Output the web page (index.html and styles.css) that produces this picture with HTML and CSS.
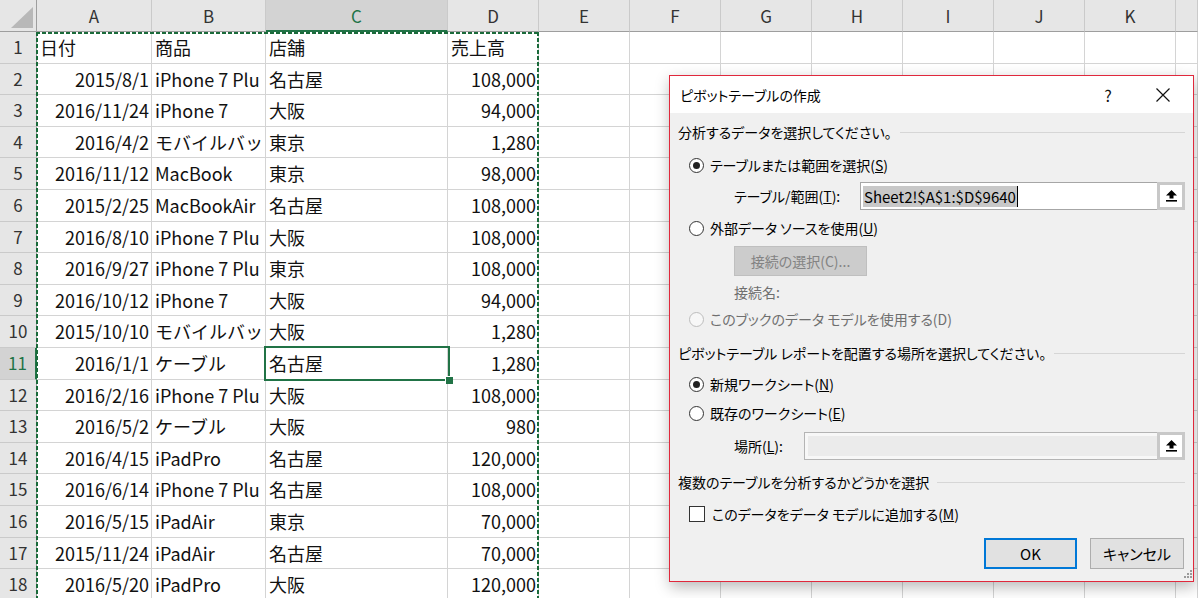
FILE: index.html
```html
<!DOCTYPE html>
<html lang="ja">
<head>
<meta charset="utf-8">
<title>ピボットテーブルの作成</title>
<link rel="stylesheet" href="styles.css">
</head>
<body>
<div class="sheet">
  <div class="grid">
    <div class="corner"><span class="tri"></span></div>
    <div class="ch">A</div><div class="ch">B</div><div class="ch sel">C</div><div class="ch">D</div><div class="ch">E</div><div class="ch">F</div><div class="ch">G</div><div class="ch">H</div><div class="ch">I</div><div class="ch">J</div><div class="ch">K</div><div class="ch"></div>

    <div class="rh">1</div><div class="c">日付</div><div class="c">商品</div><div class="c">店舗</div><div class="c">売上高</div><div class="c"></div><div class="c"></div><div class="c"></div><div class="c"></div><div class="c"></div><div class="c"></div><div class="c"></div><div class="c"></div>
    <div class="rh">2</div><div class="c r">2015/8/1</div><div class="c">iPhone 7 Plu</div><div class="c">名古屋</div><div class="c r">108,000</div><div class="c"></div><div class="c"></div><div class="c"></div><div class="c"></div><div class="c"></div><div class="c"></div><div class="c"></div><div class="c"></div>
    <div class="rh">3</div><div class="c r">2016/11/24</div><div class="c">iPhone 7</div><div class="c">大阪</div><div class="c r">94,000</div><div class="c"></div><div class="c"></div><div class="c"></div><div class="c"></div><div class="c"></div><div class="c"></div><div class="c"></div><div class="c"></div>
    <div class="rh">4</div><div class="c r">2016/4/2</div><div class="c">モバイルバッ</div><div class="c">東京</div><div class="c r">1,280</div><div class="c"></div><div class="c"></div><div class="c"></div><div class="c"></div><div class="c"></div><div class="c"></div><div class="c"></div><div class="c"></div>
    <div class="rh">5</div><div class="c r">2016/11/12</div><div class="c">MacBook</div><div class="c">東京</div><div class="c r">98,000</div><div class="c"></div><div class="c"></div><div class="c"></div><div class="c"></div><div class="c"></div><div class="c"></div><div class="c"></div><div class="c"></div>
    <div class="rh">6</div><div class="c r">2015/2/25</div><div class="c">MacBookAir</div><div class="c">名古屋</div><div class="c r">108,000</div><div class="c"></div><div class="c"></div><div class="c"></div><div class="c"></div><div class="c"></div><div class="c"></div><div class="c"></div><div class="c"></div>
    <div class="rh">7</div><div class="c r">2016/8/10</div><div class="c">iPhone 7 Plu</div><div class="c">大阪</div><div class="c r">108,000</div><div class="c"></div><div class="c"></div><div class="c"></div><div class="c"></div><div class="c"></div><div class="c"></div><div class="c"></div><div class="c"></div>
    <div class="rh">8</div><div class="c r">2016/9/27</div><div class="c">iPhone 7 Plu</div><div class="c">東京</div><div class="c r">108,000</div><div class="c"></div><div class="c"></div><div class="c"></div><div class="c"></div><div class="c"></div><div class="c"></div><div class="c"></div><div class="c"></div>
    <div class="rh">9</div><div class="c r">2016/10/12</div><div class="c">iPhone 7</div><div class="c">大阪</div><div class="c r">94,000</div><div class="c"></div><div class="c"></div><div class="c"></div><div class="c"></div><div class="c"></div><div class="c"></div><div class="c"></div><div class="c"></div>
    <div class="rh">10</div><div class="c r">2015/10/10</div><div class="c">モバイルバッ</div><div class="c">大阪</div><div class="c r">1,280</div><div class="c"></div><div class="c"></div><div class="c"></div><div class="c"></div><div class="c"></div><div class="c"></div><div class="c"></div><div class="c"></div>
    <div class="rh sel">11</div><div class="c r">2016/1/1</div><div class="c">ケーブル</div><div class="c">名古屋</div><div class="c r">1,280</div><div class="c"></div><div class="c"></div><div class="c"></div><div class="c"></div><div class="c"></div><div class="c"></div><div class="c"></div><div class="c"></div>
    <div class="rh">12</div><div class="c r">2016/2/16</div><div class="c">iPhone 7 Plu</div><div class="c">大阪</div><div class="c r">108,000</div><div class="c"></div><div class="c"></div><div class="c"></div><div class="c"></div><div class="c"></div><div class="c"></div><div class="c"></div><div class="c"></div>
    <div class="rh">13</div><div class="c r">2016/5/2</div><div class="c">ケーブル</div><div class="c">大阪</div><div class="c r">980</div><div class="c"></div><div class="c"></div><div class="c"></div><div class="c"></div><div class="c"></div><div class="c"></div><div class="c"></div><div class="c"></div>
    <div class="rh">14</div><div class="c r">2016/4/15</div><div class="c">iPadPro</div><div class="c">名古屋</div><div class="c r">120,000</div><div class="c"></div><div class="c"></div><div class="c"></div><div class="c"></div><div class="c"></div><div class="c"></div><div class="c"></div><div class="c"></div>
    <div class="rh">15</div><div class="c r">2016/6/14</div><div class="c">iPhone 7 Plu</div><div class="c">名古屋</div><div class="c r">108,000</div><div class="c"></div><div class="c"></div><div class="c"></div><div class="c"></div><div class="c"></div><div class="c"></div><div class="c"></div><div class="c"></div>
    <div class="rh">16</div><div class="c r">2016/5/15</div><div class="c">iPadAir</div><div class="c">東京</div><div class="c r">70,000</div><div class="c"></div><div class="c"></div><div class="c"></div><div class="c"></div><div class="c"></div><div class="c"></div><div class="c"></div><div class="c"></div>
    <div class="rh">17</div><div class="c r">2015/11/24</div><div class="c">iPadAir</div><div class="c">名古屋</div><div class="c r">70,000</div><div class="c"></div><div class="c"></div><div class="c"></div><div class="c"></div><div class="c"></div><div class="c"></div><div class="c"></div><div class="c"></div>
    <div class="rh">18</div><div class="c r">2016/5/20</div><div class="c">iPadPro</div><div class="c">大阪</div><div class="c r">120,000</div><div class="c"></div><div class="c"></div><div class="c"></div><div class="c"></div><div class="c"></div><div class="c"></div><div class="c"></div><div class="c"></div>
  </div>

  <div class="ants"></div>
  <div class="cursor"><span class="handle"></span></div>

  <div class="dialog">
    <div class="titlebar">
      <span class="title">ピボットテーブルの作成</span>
      <span class="help">?</span>
      <span class="close"><svg width="14" height="14" viewBox="0 0 14 14"><path d="M0.5 0.5 L13.5 13.5 M13.5 0.5 L0.5 13.5" stroke="#111" stroke-width="1.2" fill="none"/></svg></span>
    </div>
    <div class="dbody">
      <div class="group g1"><span>分析するデータを選択してください。</span><i class="rule"></i></div>
      <div class="opt o1"><span class="radio on"></span><span>テーブルまたは範囲を選択(<u>S</u>)</span></div>
      <div class="field f1">
        <span class="flabel w1">テーブル/範囲(<u>T</u>):</span>
        <div class="input">
          <span class="seltext">Sheet2!$A$1:$D$9640</span><span class="caret"></span>
          <span class="pick"><svg width="11" height="12" viewBox="0 0 11 12"><path d="M5.5 0 L11 5.5 L7.5 5.5 L7.5 8.5 L3.5 8.5 L3.5 5.5 L0 5.5 Z" fill="#000"/><rect x="0" y="10" width="11" height="1.6" fill="#000"/></svg></span>
        </div>
      </div>
      <div class="opt o2"><span class="radio"></span><span>外部データ ソースを使用(<u>U</u>)</span></div>
      <div class="brow"><span class="dbtn">接続の選択(C)...</span></div>
      <div class="dim conn">接続名:</div>
      <div class="opt o3 dim"><span class="radio off"></span><span>このブックのデータ モデルを使用する(D)</span></div>
      <div class="group g2"><span>ピボットテーブル レポートを配置する場所を選択してください。</span><i class="rule"></i></div>
      <div class="opt o4"><span class="radio on"></span><span>新規ワークシート(<u>N</u>)</span></div>
      <div class="opt o5"><span class="radio"></span><span>既存のワークシート(<u>E</u>)</span></div>
      <div class="field f2">
        <span class="flabel w2">場所(<u>L</u>):</span>
        <div class="input disabled">
          <span class="pick"><svg width="11" height="12" viewBox="0 0 11 12"><path d="M5.5 0 L11 5.5 L7.5 5.5 L7.5 8.5 L3.5 8.5 L3.5 5.5 L0 5.5 Z" fill="#000"/><rect x="0" y="10" width="11" height="1.6" fill="#000"/></svg></span>
        </div>
      </div>
      <div class="group g3"><span>複数のテーブルを分析するかどうかを選択</span><i class="rule"></i></div>
      <div class="opt o6"><span class="check"></span><span>このデータをデータ モデルに追加する(<u>M</u>)</span></div>
      <div class="footer">
        <span class="btn ok">OK</span>
        <span class="btn">キャンセル</span>
      </div>
    </div>
    <span class="grip"><svg width="10" height="10" viewBox="0 0 10 10" fill="#9a9a9a"><rect x="8" y="0" width="2" height="2"/><rect x="5" y="3" width="2" height="2"/><rect x="8" y="3" width="2" height="2"/><rect x="2" y="6" width="2" height="2"/><rect x="5" y="6" width="2" height="2"/><rect x="8" y="6" width="2" height="2"/></svg></span>
  </div>
</div>
</body>
</html>
```

FILE: styles.css
```css
* { box-sizing: border-box; }
html, body {
  margin: 0;
  padding: 0;
  width: 1198px;
  height: 598px;
  overflow: hidden;
  background: #fff;
}
body {
  font-family: "Noto Sans CJK JP", "Noto Sans", sans-serif;
  color: #000;
}
.sheet {
  position: relative;
  width: 1198px;
  height: 598px;
  overflow: hidden;
}
.grid {
  display: grid;
  grid-template-columns: 37px 115px 114px 182px 91px 91px 91px 91px 91px 91px 91px 91px 1fr;
  grid-template-rows: 32px repeat(18, 31.6px);
}
.corner {
  position: relative;
  background: #e6e6e6;
  border-right: 1px solid #9e9e9e;
  border-bottom: 1px solid #9e9e9e;
}
.tri {
  position: absolute;
  right: 3px;
  bottom: 3px;
  width: 0;
  height: 0;
  border-left: 22px solid transparent;
  border-bottom: 21px solid #b8b8b8;
}
.ch {
  background: #e6e6e6;
  border-right: 1px solid #cacaca;
  border-bottom: 1px solid #9e9e9e;
  font-size: 17px;
  color: #333;
  text-align: center;
  line-height: 31px;
}
.ch.sel {
  background: #d3d3d3;
  color: #217346;
  border-bottom: 2px solid #217346;
}
.rh {
  background: #e6e6e6;
  border-right: 1px solid #9e9e9e;
  border-bottom: 1px solid #cacaca;
  font-size: 17px;
  color: #333;
  text-align: center;
  line-height: 30px;
}
.rh.sel {
  background: #d3d3d3;
  color: #217346;
  border-right: 2px solid #217346;
}
.c {
  border-right: 1px solid #d4d4d4;
  border-bottom: 1px solid #d4d4d4;
  font-size: 18px;
  line-height: 30px;
  padding: 0 3px;
  white-space: nowrap;
  overflow: hidden;
  color: #111;
}
.c.r {
  text-align: right;
  padding-right: 2px;
}
.ants {
  position: absolute;
  left: 36px;
  top: 32px;
  width: 503px;
  height: 620px;
  pointer-events: none;
  background:
    repeating-linear-gradient(to right, #1a6a3a 0 4px, transparent 4px 6px) 0 0 / 100% 2px no-repeat,
    repeating-linear-gradient(to bottom, #1a6a3a 0 4px, transparent 4px 6px) 0 0 / 2px 100% no-repeat,
    repeating-linear-gradient(to bottom, #1a6a3a 0 4px, transparent 4px 6px) 100% 0 / 2px 100% no-repeat;
}
.cursor {
  position: absolute;
  left: 264px;
  top: 346px;
  width: 186px;
  height: 35px;
  border: 2px solid #217346;
}
.handle {
  position: absolute;
  right: -5px;
  bottom: -5px;
  width: 8px;
  height: 8px;
  background: #217346;
  border-left: 1px solid #fff;
  border-top: 1px solid #fff;
}

/* dialog */
.dialog {
  position: absolute;
  left: 669px;
  top: 75px;
  width: 525px;
  height: 507px;
  border: 1px solid #e0283c;
  background: #f0f0f0;
  box-shadow: 1px 5px 14px rgba(0, 0, 0, 0.28);
  font-size: 14px;
  font-feature-settings: "palt";
  color: #000;
}
.titlebar {
  height: 37px;
  background: #fff;
  display: flex;
  align-items: center;
  padding: 0 7px 0 10px;
}
.title {
  flex: 1;
  font-size: 14px;
  padding-top: 1px;
}
.help {
  width: 40px;
  text-align: center;
  font-size: 16px;
  color: #111;
}
.close {
  width: 46px;
  margin-left: 12px;
  display: flex;
  justify-content: center;
  align-items: center;
}
.dbody {
  padding: 6px 8px 0 8px;
}
.group {
  display: flex;
  align-items: center;
  height: 26px;
  gap: 8px;
}
.rule {
  flex: 1;
  height: 1px;
  background: #d6d6d6;
}
.opt {
  display: flex;
  align-items: center;
  height: 26px;
  padding-left: 11px;
  gap: 6px;
}
.radio {
  width: 15px;
  height: 15px;
  border: 1px solid #333;
  border-radius: 50%;
  background: #fff;
  position: relative;
  flex: none;
}
.radio.on::after {
  content: "";
  position: absolute;
  left: 3px;
  top: 3px;
  width: 7px;
  height: 7px;
  border-radius: 50%;
  background: #222;
}
.radio.off {
  border-color: #bcbcbc;
  background: #f7f7f7;
}
.check {
  width: 16px;
  height: 16px;
  border: 1px solid #333;
  background: #fff;
  flex: none;
  margin-right: 1px;
}
.dim { color: #6f6f6f; }
.field {
  display: flex;
  align-items: center;
  height: 28px;
  padding-left: 56px;
}
.flabel { flex: none; }
.w1 { width: 126px; }
.w2 { width: 70px; }
.input {
  flex: 1;
  height: 28px;
  border: 1px solid #a6a6a6;
  background: #fff;
  display: flex;
  align-items: center;
  padding-left: 2px;
  position: relative;
}
.input.disabled {
  background: #ebebeb;
  box-shadow: inset 0 0 0 3px #f7f7f7;
  border-color: #b4b4b4;
}
.seltext {
  background: #c8c8c8;
  height: 21px;
  line-height: 21px;
  padding: 0 1px;
  color: #000;
  font-size: 15px;
}
.caret {
  width: 1px;
  height: 21px;
  background: #000;
}
.pick {
  position: absolute;
  right: -1px;
  top: -1px;
  width: 28px;
  height: 28px;
  background: #fff;
  border: 3px solid #c8c8c8;
  display: flex;
  align-items: center;
  justify-content: center;
}
.o1 { margin-top: 7px; }
.f1 { margin-top: 4px; }
.o2 { margin-top: 5px; }
.brow {
  margin-top: 5px;
  height: 30px;
  padding-left: 56px;
}
.dbtn {
  display: inline-flex;
  align-items: center;
  justify-content: center;
  width: 133px;
  height: 30px;
  background: #cccccc;
  border: 1px solid #bfbfbf;
  color: #838383;
}
.conn {
  margin-top: 3px;
  height: 26px;
  line-height: 26px;
  padding-left: 56px;
}
.o3 { margin-top: 1px; }
.o3 .radio { border-color: #bdbdbd; }
.g2 { margin-top: 8px; }
.o4 { margin-top: 5px; }
.o5 { margin-top: 3px; }
.f2 { margin-top: 6px; }
.g3 { margin-top: 9px; }
.o6 { margin-top: 6px; }
.footer {
  margin-top: 11px;
  display: flex;
  justify-content: flex-end;
  gap: 13px;
  padding-right: 1px;
}
.btn {
  width: 94px;
  height: 31px;
  display: flex;
  align-items: center;
  justify-content: center;
  background: #e1e1e1;
  border: 1px solid #adadad;
  color: #000;
  font-size: 15px;
}
.btn.ok {
  width: 93px;
  border: 2px solid #0078d7;
}
.grip {
  position: absolute;
  right: 1px;
  bottom: 1px;
  width: 10px;
  height: 10px;
  display: block;
  line-height: 0;
}
```
